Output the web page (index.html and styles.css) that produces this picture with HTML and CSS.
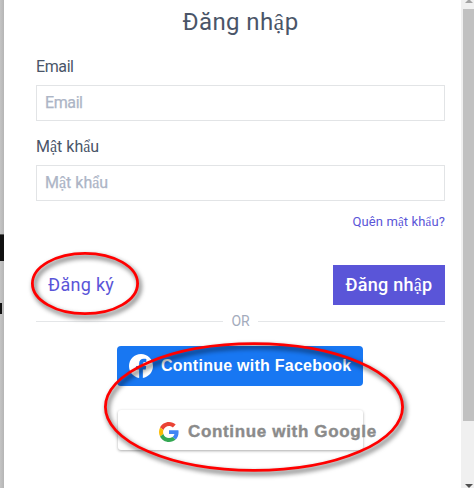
FILE: index.html
```html
<!DOCTYPE html>
<html lang="vi">
<head>
<meta charset="utf-8">
<title>Đăng nhập</title>
<link rel="stylesheet" href="styles.css">
</head>
<body>
<div class="screen">
  <div class="backdrop"><div class="band"></div><div class="bit"></div></div>
  <main class="modal">
    <h1>Đăng nh<i>ậ</i>p</h1>
    <label class="label tight">Email</label>
    <div class="input input-email tight">Email</div>
    <label class="label label-pass">M<i>ậ</i>t kh<i>ẩ</i>u</label>
    <div class="input input-pass">M<i>ậ</i>t kh<i>ẩ</i>u</div>
    <a class="forgot">Quên m<i>ậ</i>t kh<i>ẩ</i>u?</a>
    <div class="actions">
      <a class="register">Đăng ký</a>
      <button class="login">Đăng nh<i>ậ</i>p</button>
    </div>
    <div class="divider"><span>OR</span></div>
    <div class="social">
      <button class="facebook">
        <svg width="24" height="24" viewBox="0 0 24 24"><path fill="#fff" d="M24 12.07C24 5.4 18.63 0 12 0S0 5.4 0 12.07c0 6.03 4.39 11.02 10.13 11.93v-8.44H7.08v-3.49h3.05V9.41c0-3.02 1.79-4.69 4.53-4.69 1.31 0 2.68.24 2.68.24v2.97h-1.51c-1.49 0-1.96.93-1.96 1.89v2.25h3.33l-.53 3.49h-2.8V24C19.61 23.09 24 18.1 24 12.07z"/></svg>
        <span>Continue with Facebook</span>
      </button>
      <button class="google">
        <svg width="20" height="20" viewBox="0 0 48 48"><path fill="#EA4335" d="M24 9.5c3.54 0 6.71 1.22 9.21 3.6l6.85-6.85C35.9 2.38 30.47 0 24 0 14.62 0 6.51 5.38 2.56 13.22l7.98 6.19C12.43 13.72 17.74 9.5 24 9.5z"/><path fill="#4285F4" d="M46.98 24.55c0-1.57-.15-3.09-.38-4.55H24v9.02h12.94c-.58 2.96-2.26 5.48-4.78 7.18l7.73 6c4.51-4.18 7.09-10.36 7.09-17.65z"/><path fill="#FBBC05" d="M10.53 28.59c-.48-1.45-.76-2.99-.76-4.59s.27-3.14.76-4.59l-7.98-6.19C.92 16.46 0 20.12 0 24s.92 7.54 2.56 10.78l7.97-6.19z"/><path fill="#34A853" d="M24 48c6.48 0 11.93-2.13 15.89-5.81l-7.73-6c-2.15 1.45-4.92 2.3-8.16 2.3-6.26 0-11.57-4.22-13.47-9.91l-7.98 6.19C6.51 42.62 14.62 48 24 48z"/></svg>
        <span>Continue with Google</span>
      </button>
    </div>
  </main>
  <div class="scrollbar">
    <svg class="arrow-up" width="11" height="9" viewBox="0 0 11 9"><path fill="#a3a3a3" d="M1 3h8L5 -1z"/></svg>
    <div class="thumb"></div>
    <svg class="arrow-down" width="11" height="4" viewBox="0 0 11 4"><path fill="#505050" d="M1 0h8L5 4z"/></svg>
  </div>
  <svg class="marks" width="474" height="488" viewBox="0 0 474 488">
    <ellipse cx="85" cy="283.5" rx="52.6" ry="30.2"/>
    <ellipse cx="254" cy="407" rx="148.6" ry="63.4"/>
  </svg>
</div>
</body>
</html>
```
FILE: styles.css
```css
* { box-sizing: border-box; }
body { margin: 0; overflow: hidden; background: #fff; font-family: Roboto, "Liberation Sans", sans-serif; color: #4a5568; }
i { font-family: "Liberation Serif", serif; font-style: normal; line-height: 0; }
button { border: 0; margin: 0; padding: 0; font: inherit; }
.screen { position: relative; display: flex; width: 474px; height: 488px; overflow: hidden; }
.backdrop { width: 4px; padding-top: 234px; background: linear-gradient(to right, #c4c4c4, #b5b5b5); }
.band { height: 27px; background: #111; border-top: 1px solid #555; }
.bit { width: 2px; height: 11px; margin-top: 42px; background: #111; }
.modal { width: 457px; padding: 6px 16px 0 32px; background: #fff; }
h1 { margin: 0; height: 32px; line-height: 32px; font-size: 24px; font-weight: 400; text-align: center; letter-spacing: .4px; }
.label { display: block; height: 24px; margin-top: 17px; line-height: 24px; font-size: 16px; }
.input { height: 36px; margin-top: 6px; padding: 0 8px; border: 1px solid #e2e4e6; line-height: 34px; font-size: 16px; color: #adb5c6; -webkit-text-stroke: .25px; }
.tight { letter-spacing: -.4px; }
.label-pass { margin-top: 14px; }
.forgot { display: block; height: 20px; margin-top: 11px; line-height: 20px; font-size: 13px; text-align: right; letter-spacing: .12px; color: #5a55d8; }
.actions { display: flex; justify-content: space-between; margin-top: 33px; height: 40px; line-height: 40px; font-size: 18px; }
.register { padding-left: 12px; color: #5a55d8; letter-spacing: .3px; }
.login { width: 112px; background: #5a55d8; color: #fff; font-weight: 500; letter-spacing: .25px; white-space: nowrap; }
.divider { display: flex; align-items: center; gap: 8px; height: 16px; margin-top: 8px; font-size: 14px; color: #a3abbc; }
.divider::before, .divider::after { content: ""; flex: 1; height: 1px; background: #e4e6e8; }
.social { display: flex; flex-direction: column; width: 246px; margin: 17px auto 0 81px; font-family: "Liberation Sans", Arial, sans-serif; font-weight: 700; }
.facebook { display: flex; align-items: center; height: 40px; padding-left: 12px; gap: 8px; border-radius: 4px; background: #1877f2; color: #fff; font-size: 16px; letter-spacing: .25px; white-space: nowrap; }
.google { display: flex; align-items: center; height: 40px; margin: 24px 0 0 1px; padding: 3px 0 0 40.5px; gap: 9.5px; border-radius: 3px; background: #fff; box-shadow: 0 1px 3px #0005; color: #8b8b8b; font-size: 17px; letter-spacing: .66px; -webkit-text-stroke: .4px; white-space: nowrap; }
.google svg { flex: none; }
.scrollbar { display: flex; flex-direction: column; width: 13px; padding-left: 2px; background: #f0f0f0; }
.thumb { height: 412px; background: #c1c1c1; }
.arrow-up { flex: none; margin-left: 1px; }
.arrow-down { margin: auto 0 0 1px; }
.marks { position: absolute; left: 0; top: 0; fill: none; stroke: #f00; stroke-width: 2.8; filter: drop-shadow(2px 3px 2.5px #000b); pointer-events: none; }
```
